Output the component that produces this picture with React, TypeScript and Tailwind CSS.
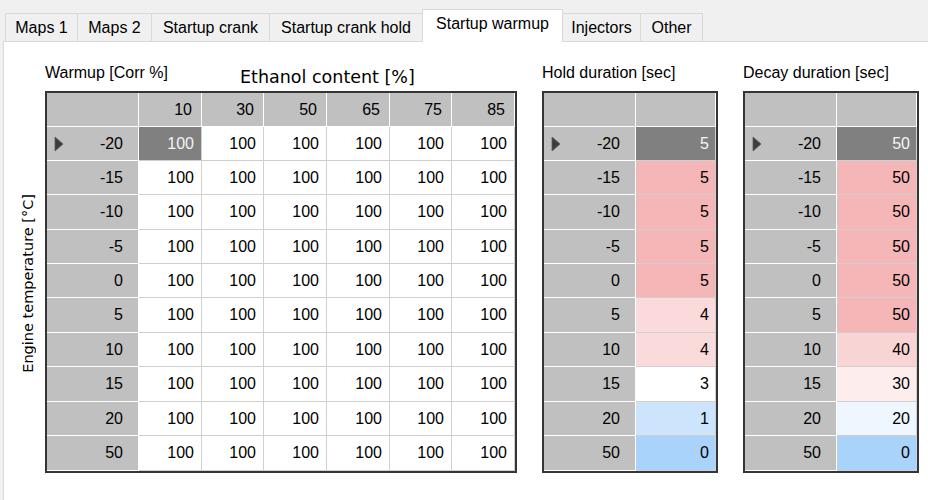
import React from "react";

const temps = [-20, -15, -10, -5, 0, 5, 10, 15, 20, 50];
const eth = [10, 30, 50, 65, 75, 85];

const PINK = "bg-[#f4b6b6]";
const holdData: { v: number; bg: string }[] = [
  { v: 5, bg: "sel" },
  { v: 5, bg: PINK },
  { v: 5, bg: PINK },
  { v: 5, bg: PINK },
  { v: 5, bg: PINK },
  { v: 4, bg: "bg-[#fadada]" },
  { v: 4, bg: "bg-[#fadada]" },
  { v: 3, bg: "bg-white" },
  { v: 1, bg: "bg-[#cce5fc]" },
  { v: 0, bg: "bg-[#a9d3fa]" },
];
const decayData: { v: number; bg: string }[] = [
  { v: 50, bg: "sel" },
  { v: 50, bg: PINK },
  { v: 50, bg: PINK },
  { v: 50, bg: PINK },
  { v: 50, bg: PINK },
  { v: 50, bg: PINK },
  { v: 40, bg: "bg-[#f9d4d4]" },
  { v: 30, bg: "bg-[#fdeeed]" },
  { v: 20, bg: "bg-[#eef6ff]" },
  { v: 0, bg: "bg-[#a9d3fa]" },
];

const tabs = [
  { label: "Maps 1", w: "w-[73px]" },
  { label: "Maps 2", w: "w-[75px]" },
  { label: "Startup crank", w: "w-[119px]" },
  { label: "Startup crank hold", w: "w-[154px]" },
  { label: "Startup warmup", w: "w-[141px]", sel: true },
  { label: "Injectors", w: "w-[79px]" },
  { label: "Other", w: "w-[63px]" },
];

const GRAY = "bg-[#c0c0c0] border-r border-b border-white";
const DATA = "border-r border-b border-[#d0d0d0]";
const SELC = "bg-[#808080] text-[#f4f4f4] border-r border-b border-[#d0d0d0]";

function Arrow() {
  return (
    <svg width="10" height="16" viewBox="0 0 10 16" className="shrink-0">
      <path d="M1 1 L9 8 L1 15 Z" fill="#3d3d3d" stroke="#5a5a5a" strokeWidth="0.8" />
    </svg>
  );
}

function RowHeader({ t, first }: { t: number; first: boolean }) {
  return (
    <div className={`${GRAY} flex items-center justify-between pl-[7px] pr-[15px]`}>
      {first ? <Arrow /> : <span />}
      <span>{t}</span>
    </div>
  );
}

function SideTable({ data }: { data: { v: number; bg: string }[] }) {
  return (
    <div className="border-2 border-[#353535] w-[176px]">
      <div className="grid grid-cols-[92px_80px] grid-rows-[34px_34px_34px_35px_34px_34px_35px_34px_35px_34px_35px] h-[378px]">
        <div className={GRAY} />
        <div className={GRAY} />
        {temps.map((t, i) => (
          <React.Fragment key={t}>
            <RowHeader t={t} first={i === 0} />
            <div
              className={`${data[i].bg === "sel" ? SELC : `${data[i].bg} ${DATA}`} flex items-center justify-end pr-[6px]`}
            >
              {data[i].v}
            </div>
          </React.Fragment>
        ))}
      </div>
    </div>
  );
}

export default function App() {
  return (
    <div className="w-[928px] h-[500px] bg-[#f0f0f0] overflow-hidden font-['Liberation_Sans',Arial,sans-serif] text-[16px] text-black">
      {/* Tab strip */}
      <div className="relative z-10 flex items-end h-[41px] pl-[5px]">
        {tabs.map((tb, i) =>
          tb.sel ? (
            <div
              key={tb.label}
              className={`${tb.w} -ml-px h-[33px] mb-[-1px] bg-white border border-b-0 border-[#d9d9d9] flex justify-center pt-[5px] text-[16px] leading-[18px]`}
            >
              {tb.label}
            </div>
          ) : (
            <div
              key={tb.label}
              className={`${tb.w} ${i === 0 ? "" : "-ml-px"} h-[28px] bg-[#f0f0f0] border border-b-0 border-[#d9d9d9] flex justify-center pt-[5px] text-[16px] leading-[18px]`}
            >
              {tb.label}
            </div>
          )
        )}
      </div>

      {/* Panel */}
      <div className="ml-[3px] h-[459px] bg-white border-l border-t border-[#d9d9d9]">
        <div className="flex pt-[22px]">
          {/* Vertical axis label */}
          <div className="w-[41px] shrink-0 flex flex-col">
            <div className="h-[27px]" />
            <div className="h-[382px] flex items-center pl-[16px] pt-[3px]">
              <span className="[writing-mode:vertical-rl] rotate-180 font-['DejaVu_Sans',sans-serif] text-[14.5px] leading-[16px] whitespace-nowrap">
                Engine temperature [°C]
              </span>
            </div>
          </div>

          {/* Main table */}
          <div className="flex flex-col shrink-0">
            <div className="h-[27px] flex items-start">
              <span className="w-[195px] shrink-0 leading-[18px]">Warmup [Corr %]</span>
              <span className="mt-[3px] font-['DejaVu_Sans',sans-serif] text-[17.5px] leading-[20px] whitespace-nowrap">
                Ethanol content [%]
              </span>
            </div>
            <div className="border-2 border-[#353535] w-[472px]">
              <div className="grid grid-cols-[92px_63px_62px_63px_63px_62px_63px] grid-rows-[34px_34px_34px_35px_34px_34px_35px_34px_35px_34px_35px] h-[378px]">
                <div className={GRAY} />
                {eth.map((e) => (
                  <div key={e} className={`${GRAY} flex items-center justify-end pr-[9px]`}>
                    {e}
                  </div>
                ))}
                {temps.map((t, r) => (
                  <React.Fragment key={t}>
                    <RowHeader t={t} first={r === 0} />
                    {eth.map((e, c) => (
                      <div
                        key={e}
                        className={`${r === 0 && c === 0 ? SELC : `bg-white ${DATA}`} flex items-center justify-end pr-[7px]`}
                      >
                        100
                      </div>
                    ))}
                  </React.Fragment>
                ))}
              </div>
            </div>
          </div>

          {/* Hold duration */}
          <div className="ml-[25px] flex flex-col shrink-0">
            <div className="h-[27px] leading-[18px]">Hold duration [sec]</div>
            <SideTable data={holdData} />
          </div>

          {/* Decay duration */}
          <div className="ml-[25px] flex flex-col shrink-0">
            <div className="h-[27px] leading-[18px]">Decay duration [sec]</div>
            <SideTable data={decayData} />
          </div>
        </div>
      </div>
    </div>
  );
}
